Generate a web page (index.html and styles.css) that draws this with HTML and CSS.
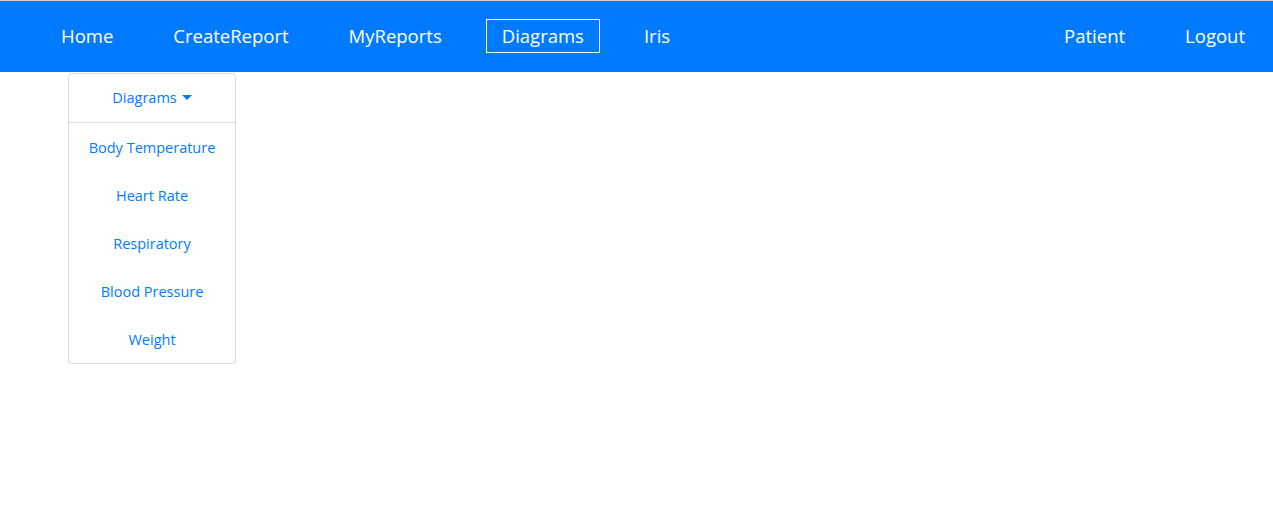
FILE: index.html
```html
<!DOCTYPE html>
<html lang="en">
<head>
<meta charset="utf-8">
<title>Diagrams</title>
<link rel="stylesheet" href="styles.css">
</head>
<body>
<nav class="navbar">
  <ul class="nav-left">
    <li><a class="nav-link" href="#">Home</a></li>
    <li><a class="nav-link" href="#">CreateReport</a></li>
    <li><a class="nav-link" href="#">MyReports</a></li>
    <li><a class="nav-link active" href="#">Diagrams</a></li>
    <li><a class="nav-link" href="#">Iris</a></li>
  </ul>
  <ul class="nav-right">
    <li><a class="nav-link" href="#">Patient</a></li>
    <li><a class="nav-link" href="#">Logout</a></li>
  </ul>
</nav>
<main class="content">
  <div class="dropdown">
    <button class="dropdown-toggle" type="button">Diagrams<span class="caret"></span></button>
    <ul class="dropdown-menu">
      <li><a href="#">Body Temperature</a></li>
      <li><a href="#">Heart Rate</a></li>
      <li><a href="#">Respiratory</a></li>
      <li><a href="#">Blood Pressure</a></li>
      <li><a href="#">Weight</a></li>
    </ul>
  </div>
</main>
</body>
</html>
```
FILE: styles.css
```css
* { box-sizing: border-box; }
html, body { margin: 0; padding: 0; }
body {
  background: #fff;
  border-top: 1px solid #cfcfcf;
  font-family: "Open Sans", "Noto Sans", sans-serif;
}
ul { list-style: none; margin: 0; padding: 0; }
a { text-decoration: none; }

.navbar {
  display: flex;
  justify-content: space-between;
  align-items: center;
  height: 71px;
  background: #007bff;
  padding: 0 0 2px 31px;
}
.nav-left, .nav-right { display: flex; align-items: center; }
.nav-right { margin-right: 12px; }
.nav-link {
  display: block;
  color: #fff;
  font-size: 18.5px;
  line-height: 24px;
  padding: 4px 15px;
  margin: 0 14px;
  border: 1px solid transparent;
}
.nav-right li:last-child .nav-link { margin-right: 0; }
.nav-link.active { border-color: #fff; }

.content { padding: 1px 0 0 68px; }
.dropdown { width: 168px; }
.dropdown-toggle {
  display: flex;
  align-items: center;
  justify-content: center;
  width: 100%;
  height: 50px;
  background: #fff;
  border: 1px solid #dcdcdc;
  border-radius: 4px 4px 0 0;
  color: #007bff;
  font-family: inherit;
  font-size: 14.5px;
  padding: 0 0 1px;
}
.caret {
  width: 0; height: 0;
  margin-left: 5px;
  border-left: 5px solid transparent;
  border-right: 5px solid transparent;
  border-top: 5px solid #007bff;
}
.dropdown-menu {
  border: 1px solid #dcdcdc;
  border-top: 0;
  border-radius: 0 0 4px 4px;
}
.dropdown-menu li a {
  display: flex;
  align-items: center;
  justify-content: center;
  height: 48px;
  color: #007bff;
  font-size: 14.5px;
}
```
